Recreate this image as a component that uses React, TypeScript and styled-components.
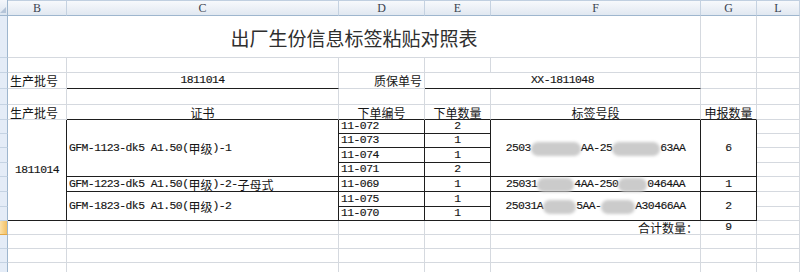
import React from "react";
import styled, { createGlobalStyle } from "styled-components";

const GlobalStyle = createGlobalStyle`
  html, body {
    margin: 0;
    padding: 0;
    background: #fff;
    overflow: hidden;
  }
`;

const COLS = [8, 59, 272, 86, 66, 210, 56, 43];
const ROWS = [16, 42, 15, 16, 16, 15, 14, 14, 15, 14, 15, 15, 14, 14, 14, 14, 14];
const LETTERS = ["B", "C", "D", "E", "F", "G", "L"];
const GRID = "#d5d9df";
const INK = "#1e1e1e";

type Align = "left" | "center" | "right";

interface CellSpec {
  c: number;
  r: number;
  cs?: number;
  rs?: number;
  align?: Align;
  br?: boolean;
  bb?: boolean;
  content?: React.ReactNode;
  title?: boolean;
}

const Sheet = styled.div`
  display: grid;
  grid-template-columns: ${COLS.map((w) => `${w}px`).join(" ")};
  grid-template-rows: ${ROWS.map((h) => `${h}px`).join(" ")};
  width: 800px;
  height: 272px;
  overflow: hidden;
  font-family: "Liberation Mono", "Noto Sans CJK SC", monospace;
  color: #111;
`;

const Corner = styled.div`
  grid-column: 1;
  grid-row: 1;
  box-sizing: border-box;
  background: linear-gradient(#f3f6fb, #dbe4ef);
  border-right: 1px solid #9eb6ce;
  border-bottom: 1px solid #9eb6ce;
  display: flex;
  align-items: flex-end;
  justify-content: flex-end;
  padding: 0 1px 2px 0;

  &::after {
    content: "";
    width: 0;
    height: 0;
    border-left: 6px solid transparent;
    border-bottom: 6px solid #b4c4d8;
  }
`;

const ColHead = styled.div<{ $c: number }>`
  grid-column: ${(p) => p.$c};
  grid-row: 1;
  box-sizing: border-box;
  display: flex;
  align-items: center;
  justify-content: center;
  background: linear-gradient(#f7f9fc, #e1e8f1);
  border-right: 1px solid #c5d2e1;
  border-bottom: 1px solid #9eb6ce;
  border-top: 1px solid #c0cfe0;
  font: 12px "Liberation Serif", serif;
  color: #3a4350;
`;

const RowHead = styled.div<{ $r: number; $active?: boolean }>`
  grid-column: 1;
  grid-row: ${(p) => p.$r};
  box-sizing: border-box;
  background: ${(p) =>
    p.$active ? "linear-gradient(90deg, #fbe0a8, #f3c063)" : "#e4ecf7"};
  border-right: 1px solid #9eb6ce;
  border-bottom: 1px solid ${(p) => (p.$active ? "#e3a845" : "#c5d3e3")};
`;

const Cell = styled.div<{
  $c: number;
  $r: number;
  $cs: number;
  $rs: number;
  $align: Align;
  $br?: boolean;
  $bb?: boolean;
}>`
  grid-column: ${(p) => p.$c} / span ${(p) => p.$cs};
  grid-row: ${(p) => p.$r} / span ${(p) => p.$rs};
  box-sizing: border-box;
  min-width: 0;
  display: flex;
  align-items: center;
  justify-content: ${(p) =>
    p.$align === "center" ? "center" : p.$align === "right" ? "flex-end" : "flex-start"};
  padding: 0 2px;
  border-right: 1px solid ${(p) => (p.$br ? INK : GRID)};
  border-bottom: 1px solid ${(p) => (p.$bb ? INK : GRID)};
  white-space: pre;
  font-size: 11.4px;
  letter-spacing: -0.55px;
  line-height: 1;
`;

const Text = styled.span`
  display: inline-flex;
  align-items: center;
  padding-top: 1px;
  color: #151515;
  -webkit-text-stroke: 0.15px #151515;
`;

const Han = styled.span`
  font: 12px "Noto Sans CJK SC", sans-serif;
  letter-spacing: 0;
  line-height: 1;
  -webkit-text-stroke: 0;
`;

const Title = styled.span`
  font: 19px "Noto Sans CJK SC", sans-serif;
  letter-spacing: 0;
  color: #2e2e2e;
  padding-top: 2px;
`;

const Smudge = styled.span<{ $w: number }>`
  display: inline-block;
  width: ${(p) => p.$w}px;
  height: 14px;
  background: #cbcbcb;
  border-radius: 7px;
  filter: blur(1.6px);
`;

const CJK = /([\u3000-\u303f\u3400-\u9fff\uff00-\uffef]+)/;

const mix = (s: string) =>
  s.split(CJK).map((part, i) => (i % 2 ? <Han key={i}>{part}</Han> : part));

const label = (...parts: (string | number)[]) => (
  <>
    {parts.map((p, i) => (typeof p === "number" ? <Smudge key={i} $w={p} /> : p))}
  </>
);

const cells: CellSpec[] = [
  { c: 2, r: 2, cs: 5, align: "center", title: true, content: "出厂生份信息标签粘贴对照表" },

  { c: 2, r: 4, content: mix("生产批号") },
  { c: 3, r: 4, align: "center", bb: true, content: "1811014" },
  { c: 4, r: 4, align: "right", content: mix("质保单号") },
  { c: 5, r: 4, cs: 2, align: "center", bb: true, content: "XX-1811048" },

  { c: 2, r: 6, content: mix("生产批号") },
  { c: 3, r: 6, align: "center", bb: true, content: mix("证书") },
  { c: 4, r: 6, align: "center", bb: true, content: mix("下单编号") },
  { c: 5, r: 6, align: "center", bb: true, content: mix("下单数量") },
  { c: 6, r: 6, align: "center", bb: true, content: mix("标签号段") },
  { c: 7, r: 6, align: "center", bb: true, content: mix("申报数量") },

  { c: 2, r: 7, rs: 7, align: "center", br: true, bb: true, content: "1811014" },

  { c: 3, r: 7, rs: 4, br: true, bb: true, content: mix("GFM-1123-dk5 A1.50(甲级)-1") },
  { c: 3, r: 11, br: true, bb: true, content: mix("GFM-1223-dk5 A1.50(甲级)-2-子母式") },
  { c: 3, r: 12, rs: 2, br: true, bb: true, content: mix("GFM-1823-dk5 A1.50(甲级)-2") },

  { c: 6, r: 7, rs: 4, align: "center", br: true, bb: true, content: label("2503", 50, "AA-25", 48, "63AA") },
  { c: 6, r: 11, align: "center", br: true, bb: true, content: label("25031", 37, "4AA-250", 29, "0464AA") },
  { c: 6, r: 12, rs: 2, align: "center", br: true, bb: true, content: label("25031A", 33, "5AA-", 34, "A30466AA") },

  { c: 7, r: 7, rs: 4, align: "center", br: true, bb: true, content: "6" },
  { c: 7, r: 11, align: "center", br: true, bb: true, content: "1" },
  { c: 7, r: 12, rs: 2, align: "center", br: true, bb: true, content: "2" },

  { c: 6, r: 14, align: "right", content: mix("合计数量：") },
  { c: 7, r: 14, align: "center", content: "9" },
];

const orders: [string, string][] = [
  ["11-072", "2"],
  ["11-073", "1"],
  ["11-074", "1"],
  ["11-071", "2"],
  ["11-069", "1"],
  ["11-075", "1"],
  ["11-070", "1"],
];

orders.forEach(([code, qty], i) => {
  cells.push({ c: 4, r: 7 + i, br: true, bb: true, content: code });
  cells.push({ c: 5, r: 7 + i, align: "center", br: true, bb: true, content: qty });
});

// every grid slot not covered by a content cell still gets an empty cell for its gridlines
const taken = new Set<string>();
cells.forEach((cell) => {
  for (let r = cell.r; r < cell.r + (cell.rs ?? 1); r++)
    for (let c = cell.c; c < cell.c + (cell.cs ?? 1); c++) taken.add(`${c}:${r}`);
});
for (let r = 2; r <= ROWS.length; r++)
  for (let c = 2; c <= COLS.length; c++)
    if (!taken.has(`${c}:${r}`)) cells.push({ c, r });

function App() {
  return (
    <>
      <GlobalStyle />
      <Sheet>
        <Corner />
        {LETTERS.map((l, i) => (
          <ColHead key={l} $c={i + 2}>
            {l}
          </ColHead>
        ))}
        {ROWS.slice(1).map((_, i) => (
          <RowHead key={i} $r={i + 2} $active={i + 2 === 14} />
        ))}
        {cells.map((cell) => (
          <Cell
            key={`${cell.c}-${cell.r}`}
            $c={cell.c}
            $r={cell.r}
            $cs={cell.cs ?? 1}
            $rs={cell.rs ?? 1}
            $align={cell.align ?? "left"}
            $br={cell.br}
            $bb={cell.bb}
          >
            {cell.title ? <Title>{cell.content}</Title> : <Text>{cell.content}</Text>}
          </Cell>
        ))}
      </Sheet>
    </>
  );
}

export default App;
